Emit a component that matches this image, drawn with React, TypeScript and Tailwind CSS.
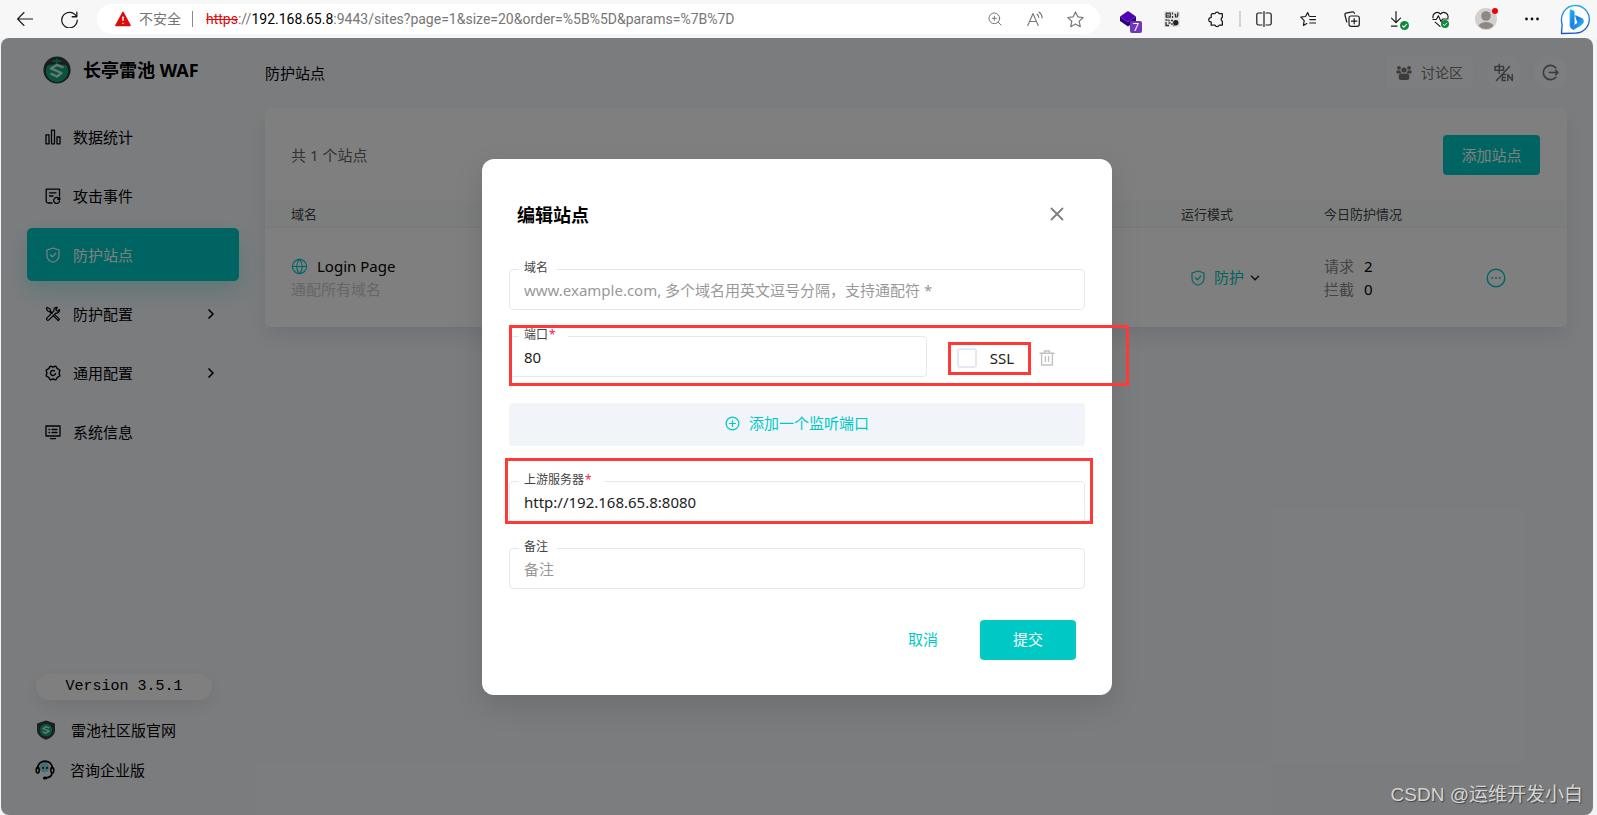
import type { ReactNode } from "react";
import { ChevronDown, ChevronRight, Globe, X, ZoomIn } from "lucide-react";

type IconProps = { className?: string };

function Stroke({ className, width = 1.2, size = 16, children }: IconProps & { width?: number; size?: number; children: ReactNode }) {
  return (
    <svg
      aria-hidden="true"
      viewBox={`0 0 ${size} ${size}`}
      className={className}
      fill="none"
      stroke="currentColor"
      strokeWidth={width}
      strokeLinecap="round"
      strokeLinejoin="round"
    >
      {children}
    </svg>
  );
}

const ShieldCheckIcon = ({ className }: IconProps) => (
  <Stroke className={className}>
    <path d="M8 1 L14 3 V8.5 C14 12 11 14.3 8 15.3 C5 14.3 2 12 2 8.5 V3 Z" />
    <path d="M5.5 8 L7.4 9.8 L10.8 6.2" />
  </Stroke>
);

const ChartIcon = ({ className }: IconProps) => (
  <Stroke className={className} width={1.3}>
    <path d="M1 5.8h3v9H1zM6.5 1.2h3v13.6h-3zM12 8h3v6.8h-3z" />
  </Stroke>
);

const EventIcon = ({ className }: IconProps) => (
  <Stroke className={className} width={1.3}>
    <path d="M7 15H3.2A2 2 0 0 1 1.2 13V1.2H14.5V8" />
    <path d="M4.5 4.8H11M4.5 8H8" />
    <path d="M14.3 11A3 3 0 1 0 14.6 13.2M14.8 9.6V11.5H12.8" />
  </Stroke>
);

const ToolsIcon = ({ className }: IconProps) => (
  <Stroke className={className} width={1.2}>
    <path d="M2.2 1.5L5 2.8L5.6 5.2L7.4 7M9.6 8.6L14.4 13.2L13.2 14.6L8.4 9.8M6 7L4.6 5.8L2.4 4.8L1.4 2.4L2.2 1.5" />
    <path d="M14.5 3.6L12.4 5.2L10.8 3.6L12.3 1.4C10 .9 8.3 2.8 9 4.9L1.8 12.2C.9 13.4 2.4 15 3.7 14.1L11 7C13 7.5 15 5.8 14.5 3.6Z" />
  </Stroke>
);

const GearIcon = ({ className }: IconProps) => (
  <Stroke className={className} width={1.4}>
    <path d="M5.2 1.2L8 2L10.8 1.2L12.3 3.6L14.8 5L14.2 8L14.8 11L12.3 12.4L10.8 14.8L8 14L5.2 14.8L3.7 12.4L1.2 11L1.8 8L1.2 5L3.7 3.6Z" />
    <path d="M10.4 8.6A2.5 2.5 0 1 1 9.4 5.9" />
  </Stroke>
);

const MonitorIcon = ({ className }: IconProps) => (
  <Stroke className={className} width={1.3}>
    <path d="M1 2h14v10H1zM5.5 14.6h5" />
    <path d="M4 5.5h.6M4 8.5h.6M7 5.5h5M7 8.5h5" />
  </Stroke>
);

const TrashIcon = ({ className }: IconProps) => (
  <Stroke className={className} width={1.4}>
    <path d="M1 3.2H15M5.5 2.8V1H10.5V2.8M2.6 3.4V15H13.4V3.4M6.4 6.5V11.5M9.6 6.5V11.5" />
  </Stroke>
);

const PlusCircleIcon = ({ className }: IconProps) => (
  <Stroke className={className} width={1.3}>
    <circle cx="8" cy="8" r="6.8" />
    <path d="M8 4.8V11.2M4.8 8H11.2" />
  </Stroke>
);

const MoreCircleIcon = ({ className }: IconProps) => (
  <svg aria-hidden="true" viewBox="0 0 20 20" className={className}>
    <circle cx="10" cy="10" r="8.8" fill="none" stroke="currentColor" strokeWidth="1.4" />
    <g fill="currentColor">
      <circle cx="6.2" cy="10" r="1" />
      <circle cx="10" cy="10" r="1" />
      <circle cx="13.8" cy="10" r="1" />
    </g>
  </svg>
);

const GroupIcon = ({ className }: IconProps) => (
  <svg aria-hidden="true" viewBox="0 0 16 16" className={className} fill="currentColor">
    <circle cx="3" cy="2.8" r="1.9" />
    <circle cx="13" cy="2.8" r="1.9" />
    <circle cx="8" cy="5" r="2.6" />
    <path d="M.5 5.4h3.8c.2 1.6.8 2.4 1.6 3H1.6Q.5 8.4 .5 7.2zM15.5 5.4h-3.8c-.2 1.6-.8 2.4-1.6 3h4.3q1.1 0 1.100-1.200zM4.500 8.800h7q1.800.4 1.800 2.300v1.900q0 2-2 2H4.700q-2 0-2-2v-1.900q0-1.900 1.800-2.300z" />
  </svg>
);

const LanguageIcon = ({ className }: IconProps) => (
  <Stroke className={className} width={1.5} size={20}>
    <path d="M1 3.500H9.500V7.200H1zM5.200 1.200V10.500" />
    <path d="M2.500 17.500L15.500 3.500" width="1.200" />
    <path d="M11.500 11.500H8.300V17.500H11.500M8.300 14.500H11.200M13.800 17.500V11.500L18.300 17.500V11.500" />
  </Stroke>
);

const LogoutIcon = ({ className }: IconProps) => (
  <Stroke className={className} width={1.5}>
    <path d="M13 3.600A6.700 6.700 0 1 0 13 12.400M7 8H15M13 6L15 8L13 10" />
  </Stroke>
);

const LogoIcon = ({ className }: IconProps) => (
  <svg aria-hidden="true" viewBox="0 0 28 28" className={className}>
    <circle cx="14" cy="14" r="13.600" fill="#38393d" />
    <circle cx="14" cy="15" r="11" fill="#12a878" />
    <path d="M4 9C8 3 20 3 24 9L18 8.500L14 7L10 8.500Z" fill="#2f3a38" />
    <path d="M14 2.500V9M10 5H18" stroke="#12a878" strokeWidth="1.500" />
    <path d="M20.500 11.500L14 9L8 12.500L18.500 17L14 20.500L7.500 17.500" fill="none" stroke="#d8efe8" strokeWidth="2.400" strokeLinejoin="round" />
  </svg>
);

const ShieldLogoIcon = ({ className }: IconProps) => (
  <svg aria-hidden="true" viewBox="0 0 20 20" className={className}>
    <path d="M10 .5L19 3.500V10C19 15 15 18 10 19.800C5 18 1 15 1 10V3.500Z" fill="#3a3c40" />
    <circle cx="10" cy="10" r="6.300" fill="#12a878" />
    <path d="M13.500 8L10 6.600L7 8.600L13 11L10 13.200L6.500 11.600" fill="none" stroke="#d8efe8" strokeWidth="1.500" strokeLinejoin="round" />
  </svg>
);

const HeadsetIcon = ({ className }: IconProps) => (
  <svg aria-hidden="true" viewBox="0 0 20 20" className={className} fill="none" stroke="#000" strokeLinecap="round">
    <circle cx="9.500" cy="7.500" r="5" fill="#8fdcdc" stroke="none" />
    <path d="M2.800 8C3 -1 17 -1 17.200 8" strokeWidth="1.800" />
    <rect x="1.300" y="7.500" width="2.800" height="5.500" rx="1.400" strokeWidth="1.600" />
    <rect x="15.900" y="7.500" width="2.800" height="5.500" rx="1.400" strokeWidth="1.600" />
    <path d="M17 13.500C16.500 16.500 14 17.600 11 17.800" strokeWidth="1.600" />
    <ellipse cx="10" cy="17.900" rx="2.200" ry="1.500" fill="#000" stroke="none" />
    <path d="M8.200 7.500V8.200M12 7.500V8.200" strokeWidth="1.600" />
  </svg>
);

function BrowserIcon({ label, children, className = "w-11" }: { label: string; children: ReactNode; className?: string }) {
  return (
    <button type="button" aria-label={label} className={`flex h-full shrink-0 items-center justify-center ${className}`}>
      {children}
    </button>
  );
}

function BrowserBar() {
  return (
    <header className="flex h-[38px] shrink-0 items-center bg-[#f7f7f7] text-[#1b1b1b]">
      <BrowserIcon label="后退" className="ml-[3px] w-11">
        <Stroke className="size-4" width={1.100}>
          <path d="M.6 8H15.600M7 1.500L.6 8L7 14.500" />
        </Stroke>
      </BrowserIcon>
      <BrowserIcon label="刷新">
        <Stroke className="size-[17px]" width={1.200}>
          <path d="M14.500 5.200A7.300 7.300 0 1 0 15.300 8.500M14.900 1V5.400H10.500" />
        </Stroke>
      </BrowserIcon>
      <div className="ml-[6px] flex h-[30px] min-w-0 flex-1 items-center rounded-full bg-white pr-[5px] pl-[18px] text-sm text-[#767676]">
        <svg aria-hidden="true" viewBox="0 0 16 16" className="size-4 shrink-0">
          <path d="M8 1.300L15.200 14.500H.8Z" fill="#e00b0b" stroke="#e00b0b" strokeWidth="1.400" strokeLinejoin="round" />
          <path d="M8 5.500V9.800M8 11.700V12.700" stroke="#fff" strokeWidth="1.500" />
        </svg>
        <span className="ml-2 shrink-0">不安全</span>
        <span className="mx-[11px] h-4 w-px shrink-0 bg-[#8a8a8a]" />
        <span className="min-w-0 flex-1 truncate pl-[2px] font-[Roboto,sans-serif]">
          <span className="text-[#e00b0b] line-through">https</span>://<span className="text-black">192.168.65.8</span>
          :9443/sites?page=1&amp;size=20&amp;order=%5B%5D&amp;params=%7B%7D
        </span>
        <BrowserIcon label="缩放" className="w-10">
          <ZoomIn className="size-4" strokeWidth={1.500} />
        </BrowserIcon>
        <BrowserIcon label="大声朗读" className="w-10">
          <Stroke className="size-4" width={1.100}>
            <path d="M.8 14.500L6 2.500L11.200 14.500M2.600 10.500H9.400M10 3.300Q11.500 4.500 11.800 6.500M12 1Q15 3 15.200 7" />
          </Stroke>
        </BrowserIcon>
        <BrowserIcon label="收藏" className="w-10">
          <Stroke className="size-[17px]" width={1.100}>
            <path d="M8 .9L10.200 5.500L15.200 6.100L11.500 9.600L12.500 14.800L8 12.300L3.500 14.800L4.500 9.600L.8 6.100L5.800 5.500Z" />
          </Stroke>
        </BrowserIcon>
      </div>
      <nav aria-label="浏览器工具" className="ml-[6px] flex h-full shrink-0 items-center">
        <BrowserIcon label="扩展" className="relative w-11">
          <svg aria-hidden="true" viewBox="0 0 16 16" className="size-4">
            <path d="M0 5.500L8 11L16 5.500V10L8 15.500L0 10Z" fill="#2b007c" />
            <path d="M8 0L16 5.500L8 11L0 5.500Z" fill="#5200b5" />
          </svg>
          <span className="absolute right-2 bottom-[5px] flex h-3 w-3 items-center justify-center rounded-xs bg-[#7236bb] text-[11px] leading-3 text-white">
            7
          </span>
        </BrowserIcon>
        <BrowserIcon label="二维码">
          <svg aria-hidden="true" viewBox="0 0 16 16" className="size-4">
            <rect width="16" height="16" rx="1" fill="#e6e6e6" />
            <g fill="none" stroke="#333" strokeWidth="1.300">
              <path d="M2.200 2.200h4v4h-4zM4 3.600v1.300M8.500 1.500v2M8.500 5v2M10.500 3.500h1v3M13.800 1.500v2.500l-1 2.500M1.500 9h2M5 8.500v2M7 9.500h2M2 11v3.500h3M4.500 12h2M8 12v2M9.500 14.500h1" />
            </g>
            <circle cx="11.800" cy="11.800" r="2.700" fill="#222" />
          </svg>
        </BrowserIcon>
        <BrowserIcon label="扩展程序">
          <Stroke className="size-[17px]" width={1.200}>
            <path d="M4.500 2.500H6.600A2 2 0 0 1 10.400 2.500H13.500V6A2 2 0 0 0 13.500 9.600V13.300H10.500A2 2 0 0 1 6.700 13.300H3V10.300A2 2 0 0 1 2.500 6.200H3V4Q3 2.500 4.500 2.500Z" />
          </Stroke>
        </BrowserIcon>
        <span className="mx-px h-4 w-[2px] bg-[#d3d3d3]" />
        <BrowserIcon label="分屏">
          <Stroke className="size-4" width={1.200}>
            <path d="M6 2H2.500Q.8 2 .8 3.700V12.300Q.8 14 2.500 14H6M10 2H13.500Q15.200 2 15.200 3.700V12.300Q15.200 14 13.500 14H10M8 .6V15.400" />
          </Stroke>
        </BrowserIcon>
        <BrowserIcon label="收藏夹">
          <Stroke className="size-4" width={1.200}>
            <path d="M9 4.800L7.700 1.500L5.500 5.500L.8 6.200L4.200 9.700L3.400 14.500L6.800 12.600M9.800 5.500H15.500M9.800 8.700H15.500M9.800 12H15.500" />
          </Stroke>
        </BrowserIcon>
        <BrowserIcon label="集锦">
          <Stroke className="size-4" width={1.200}>
            <rect x="5" y="5" width="10.300" height="10.300" rx="2" />
            <path d="M10.200 7.500V12.800M7.500 10.200H12.800M2.800 11L.9 4Q.6 2.500 2 2.100L8.500.8Q10 .6 10.500 2.400" />
          </Stroke>
        </BrowserIcon>
        <BrowserIcon label="下载" className="relative w-11">
          <Stroke className="size-4" width={1.200}>
            <path d="M8 .6V11.500M3.500 7.200L8 11.700L12.500 7.200M3.500 15.200H9" />
          </Stroke>
          <CheckBadge className="absolute right-[9px] bottom-2 size-[9px]" />
        </BrowserIcon>
        <BrowserIcon label="性能" className="relative w-11">
          <Stroke className="size-[17px]" width={1.100}>
            <path d="M1 6.500C0 2 5.500-.5 8 3C10.500-.5 16 2 15 6.500M.8 8H4L6 4.500L8.500 10L10 7.500H15.200M3 10.500L7.500 14.500" />
          </Stroke>
          <CheckBadge className="absolute right-[13px] bottom-[10px] size-2" />
        </BrowserIcon>
        <BrowserIcon label="个人资料" className="relative w-12">
          <svg aria-hidden="true" viewBox="0 0 22 22" className="size-[22px]">
            <circle cx="11" cy="11" r="11" fill="#d2cfcc" />
            <circle cx="11" cy="8" r="4.800" fill="#8b8886" />
            <path d="M3.500 17.500Q6 14 11 14T18.500 17.500Q15.500 21 11 21T3.500 17.500Z" fill="#8b8886" />
          </svg>
          <span className="absolute top-2 right-3 size-[6px] rounded-full bg-[#f40000]" />
        </BrowserIcon>
        <BrowserIcon label="更多">
          <svg aria-hidden="true" viewBox="0 0 16 4" className="h-1 w-4" fill="#111">
            <circle cx="2.500" cy="2" r="1.400" />
            <circle cx="8" cy="2" r="1.400" />
            <circle cx="13.500" cy="2" r="1.400" />
          </svg>
        </BrowserIcon>
        <BrowserIcon label="Bing" className="w-[43px]">
          <svg aria-hidden="true" viewBox="0 0 32 32" className="size-[31px]">
            <defs>
              <linearGradient id="ring" x1="0" y1="0" x2="0" y2="1">
                <stop offset="0" stopColor="#27a9e8" />
                <stop offset="1" stopColor="#1b56c4" />
              </linearGradient>
              <linearGradient id="mark" x1="0" y1="0" x2="1" y2="1">
                <stop offset="0" stopColor="#1fb6f0" />
                <stop offset=".5" stopColor="#1878e4" />
                <stop offset="1" stopColor="#2fd0f0" />
              </linearGradient>
            </defs>
            <path d="M1.500 30.500L2.200 21C-.5 12 5 1.500 16 1.500A14 14 0 0 1 16 30Z" fill="#fff" stroke="url(#ring)" strokeWidth="1.400" strokeLinejoin="round" />
            <path d="M10.500 6L14.500 7.500V21L11.500 24.500L10.500 22ZM16 12L23.500 15.500Q25.500 19 22 21.500L13.500 26.500L11.500 24.500L18.500 19.500Z" fill="url(#mark)" stroke="url(#mark)" strokeLinejoin="round" />
          </svg>
        </BrowserIcon>
      </nav>
    </header>
  );
}

function CheckBadge({ className }: IconProps) {
  return (
    <svg aria-hidden="true" viewBox="0 0 10 10" className={className}>
      <circle cx="5" cy="5" r="5" fill="#0f8a3c" />
      <path d="M2.500 5.200L4.300 6.900L7.500 3.500" fill="none" stroke="#fff" strokeWidth="1.200" />
    </svg>
  );
}

const menu = [
  { label: "数据统计", Icon: ChartIcon },
  { label: "攻击事件", Icon: EventIcon },
  { label: "防护站点", Icon: ShieldCheckIcon, active: true },
  { label: "防护配置", Icon: ToolsIcon, nested: true },
  { label: "通用配置", Icon: GearIcon, nested: true },
  { label: "系统信息", Icon: MonitorIcon },
];

function Sidebar() {
  return (
    <aside className="flex w-[264px] shrink-0 flex-col px-[26px]">
      <div className="mt-[18px] flex h-[27px] items-center gap-3 pl-4">
        <LogoIcon className="size-7" />
        <span className="text-lg font-bold">长亭雷池 WAF</span>
      </div>
      <nav aria-label="主菜单" className="mt-[27px] flex flex-col gap-[6px]">
        {menu.map(({ label, Icon, active, nested }) => (
          <a
            key={label}
            href="#"
            className={
              active
                ? "flex h-[53px] items-center rounded-[5px] bg-[#00c9c5] pr-5 pl-[18px] text-white shadow-[0_10px_25px_rgba(0,201,197,0.25)]"
                : "flex h-[53px] items-center rounded-[5px] pr-5 pl-[18px]"
            }
          >
            <Icon className="size-4" />
            <span className="ml-3 flex-1">{label}</span>
            {nested && <ChevronRight className="size-4" strokeWidth={2.500} />}
          </a>
        ))}
      </nav>
      <div className="mt-auto flex flex-col pb-[25px]">
        <div className="mr-[27px] ml-[9px] flex h-[26px] items-center justify-center rounded-full bg-white font-['Liberation_Mono','DejaVu_Sans_Mono',monospace] shadow-[0_6px_16px_rgba(120,130,150,0.15)]">
          Version 3.5.1
        </div>
        <a href="#" className="mt-[10px] flex h-10 items-center pl-[9px]">
          <ShieldLogoIcon className="size-5" />
          <span className="ml-[15px]">雷池社区版官网</span>
        </a>
        <a href="#" className="flex h-10 items-center pl-2">
          <HeadsetIcon className="size-5" />
          <span className="ml-[15px]">咨询企业版</span>
        </a>
      </div>
    </aside>
  );
}

function SitesPage() {
  return (
    <main className="flex min-w-0 flex-1 flex-col pr-[26px]">
      <div className="mt-[18px] flex h-[33px] items-center justify-between">
        <h1>防护站点</h1>
        <div className="flex items-center gap-[14px] text-[#767676]">
          <button type="button" className="flex h-[33px] items-center gap-[9px] rounded-[5px] bg-white/50 px-[10px] text-sm">
            <GroupIcon className="size-4" />
            讨论区
          </button>
          <button type="button" aria-label="语言" className="flex size-[33px] items-center justify-center rounded-full bg-white/50">
            <LanguageIcon className="size-5" />
          </button>
          <button type="button" aria-label="退出登录" className="flex size-[33px] items-center justify-center rounded-full bg-white/50">
            <LogoutIcon className="size-[17px]" />
          </button>
        </div>
      </div>
      <section className="mt-[19px] rounded-[5px] bg-white shadow-[0_10px_20px_rgba(110,120,145,0.15)]">
        <div className="flex items-center justify-between pt-[27px] pr-[27px] pb-[26px] pl-[26px]">
          <p className="text-[#666]">共 1 个站点</p>
          <button type="button" className="h-10 w-[97px] rounded-[4px] bg-[#00c9c5] text-white">
            添加站点
          </button>
        </div>
        <table className="w-full table-fixed text-left">
          <colgroup>
            <col />
            <col className="w-[143px]" />
            <col className="w-[163px]" />
            <col className="w-[106px]" />
          </colgroup>
          <thead className="border-b border-[#f1f5f4] bg-[#f8fcfa] text-[13px] leading-[26px] text-[#444]">
            <tr>
              <th className="px-[26px] font-normal">域名</th>
              <th className="px-[26px] font-normal">运行模式</th>
              <th className="px-[26px] font-normal">今日防护情况</th>
              <th aria-label="操作" />
            </tr>
          </thead>
          <tbody className="leading-[23px]">
            <tr>
              <td className="px-[26px] pt-[27px] pb-[26px]">
                <div className="flex items-center gap-[9px]">
                  <Globe className="size-[17px] text-[#00c9c5]" strokeWidth={1.600} />
                  Login Page
                </div>
                <div className="text-[#ccc]">通配所有域名</div>
              </td>
              <td className="pl-[35px]">
                <button type="button" className="flex items-center whitespace-nowrap text-[#00c9c5]">
                  <ShieldCheckIcon className="size-4" />
                  <span className="ml-2">防护</span>
                  <ChevronDown className="ml-1 size-[14px] text-[#333]" strokeWidth={3} />
                </button>
              </td>
              <td className="px-[26px] pt-px">
                <div>
                  <span className="mr-[10px] text-[#888]">请求</span>2
                </div>
                <div>
                  <span className="mr-[10px] text-[#888]">拦截</span>0
                </div>
              </td>
              <td className="px-[25px]">
                <button type="button" aria-label="更多操作" className="flex text-[#00c9c5]">
                  <MoreCircleIcon className="size-5" />
                </button>
              </td>
            </tr>
          </tbody>
        </table>
      </section>
    </main>
  );
}

type FieldProps = { id: string; label: string; required?: boolean; value?: string; placeholder?: string };

function Field({ id, label, required, value, placeholder }: FieldProps) {
  return (
    <div className="relative min-w-0 flex-1">
      <label
        htmlFor={id}
        className="absolute -top-[9px] left-[10px] bg-white pr-2 pl-[5px] text-xs leading-4 text-[#444]"
      >
        {label}
        {required && <span className="mr-1 ml-px text-[#ff1844]">*</span>}
      </label>
      <input
        id={id}
        type="text"
        defaultValue={value}
        placeholder={placeholder}
        required={required}
        className="block h-[41px] w-full rounded-[4px] border border-[#e3e8f1] bg-white px-[14px] pt-[2px] text-[#222] outline-none placeholder:text-[#999]"
      />
    </div>
  );
}

function EditSiteDialog() {
  return (
    <form
      role="dialog"
      aria-labelledby="dialog-title"
      className="w-[630px] max-w-full rounded-xl bg-white px-[27px] pt-[43px] pb-[35px] shadow-[0_10px_30px_rgba(0,0,0,0.12)]"
    >
      <div className="flex h-6 items-center justify-between pr-[17px] pl-2">
        <h2 id="dialog-title" className="pt-[2px] text-lg font-bold">
          编辑站点
        </h2>
        <button type="button" aria-label="关闭" className="text-[#808080]">
          <X className="size-[22px]" strokeWidth={2} />
        </button>
      </div>
      <div className="mt-[43px] flex">
        <Field id="domain" label="域名" placeholder="www.example.com, 多个域名用英文逗号分隔，支持通配符 *" />
      </div>
      <div className="relative mt-[26px] flex items-center pr-[30px]">
        <Field id="port" label="端口" required value="80" />
        <div className="flex items-center pt-[3px]">
          <label className="relative ml-[30px] flex items-center gap-[13px] text-[#222]">
            <input type="checkbox" className="size-5 appearance-none rounded-[3px] border-2 border-[#e3e8f1] bg-white" />
            SSL
            <span className="pointer-events-none absolute -top-1 -right-[17px] -bottom-[5px] -left-[9px] border-3 border-[#ff3838]" />
          </label>
          <button type="button" aria-label="删除端口" className="ml-[25px] text-[#c2c2c2]">
            <TrashIcon className="size-4" />
          </button>
        </div>
        <span className="pointer-events-none absolute -top-[11px] -right-[44px] -bottom-[9px] left-0 border-3 border-[#ff3838]" />
      </div>
      <button
        type="button"
        className="mt-[26px] flex h-[43px] w-full items-center justify-center gap-[9px] rounded-[4px] bg-[#f1f5f9] pb-[2px] text-[#00c9c5]"
      >
        <PlusCircleIcon className="size-[15px]" />
        添加一个监听端口
      </button>
      <div className="relative mt-[35px] flex">
        <Field id="upstream" label="上游服务器" required value="http://192.168.65.8:8080" />
        <span className="pointer-events-none absolute -top-[23px] -right-2 -bottom-[2px] -left-1 border-3 border-[#ff3838]" />
      </div>
      <div className="mt-[26px] flex">
        <Field id="remark" label="备注" placeholder="备注" />
      </div>
      <div className="mt-[31px] flex justify-end gap-[26px] pr-[9px]">
        <button type="button" className="px-4 pb-[2px] text-[#00c9c5]">
          取消
        </button>
        <button type="submit" className="h-10 w-24 rounded-[4px] bg-[#00c9c5] pb-[2px] text-white">
          提交
        </button>
      </div>
    </form>
  );
}

export default function App() {
  return (
    <div className="flex min-h-screen flex-col bg-[#f3f4f6] font-['Noto_Sans','Noto_Sans_CJK_SC',sans-serif] text-[15px] leading-6 text-black">
      <BrowserBar />
      <div className="relative mr-1 ml-px flex flex-1 overflow-hidden rounded-lg bg-[#f7f9fc]">
        <Sidebar />
        <SitesPage />
        <div className="absolute inset-0 flex items-center justify-center bg-black/50">
          <EditSiteDialog />
        </div>
        <p className="absolute right-[10px] bottom-[6px] font-['Liberation_Sans','Noto_Sans_CJK_SC',sans-serif] text-[19px] leading-7 text-[#d4d4d4] [text-shadow:1px_1px_1px_#444]">
          CSDN @运维开发小白
        </p>
      </div>
    </div>
  );
}
